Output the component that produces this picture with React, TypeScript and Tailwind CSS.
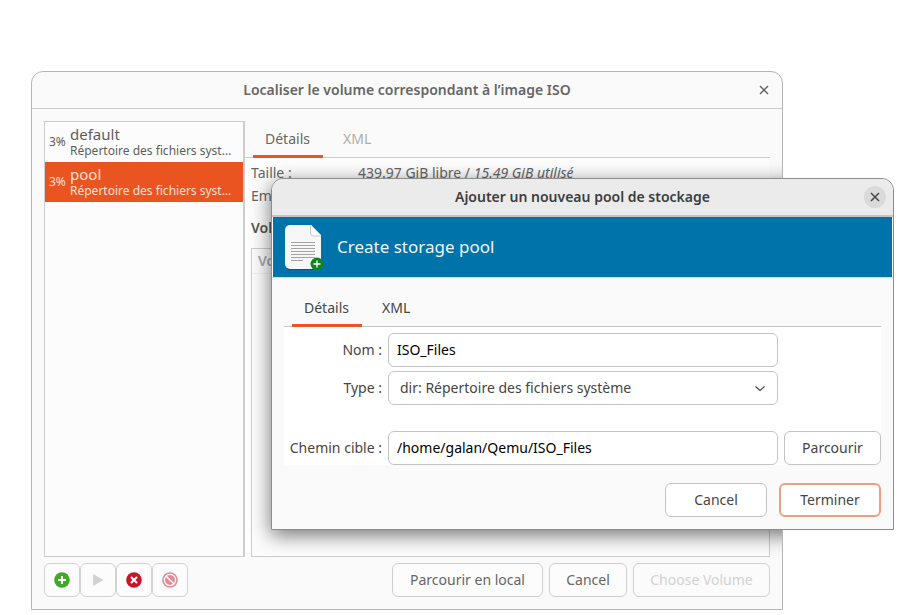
import type { ButtonHTMLAttributes, ReactNode } from "react";
import { clsx } from "clsx";

function CloseIcon() {
  return (
    <svg width="10" height="10" viewBox="0 0 10 10" fill="none" stroke="currentColor" strokeWidth="1.5" aria-hidden="true">
      <path d="M1 1l8 8M9 1L1 9" />
    </svg>
  );
}

function AddIcon() {
  return (
    <svg width="16" height="16" viewBox="0 0 16 16" aria-hidden="true">
      <circle cx="8" cy="8" r="7.8" fill="#41a829" />
      <path d="M8 4v8M4 8h8" stroke="#fff" strokeWidth="1.8" />
    </svg>
  );
}

function PlayIcon() {
  return (
    <svg width="16" height="16" viewBox="0 0 16 16" aria-hidden="true">
      <path d="M3 2l10.5 6L3 14z" fill="#d2d2d2" />
    </svg>
  );
}

function StopIcon() {
  return (
    <svg width="16" height="16" viewBox="0 0 16 16" aria-hidden="true">
      <circle cx="8" cy="8" r="7.8" fill="#c7162b" />
      <path d="M5 5l6 6M11 5l-6 6" stroke="#fff" strokeWidth="2" />
    </svg>
  );
}

function ForbiddenIcon() {
  return (
    <svg width="16" height="16" viewBox="0 0 16 16" aria-hidden="true">
      <circle cx="8" cy="8" r="7.8" fill="#e38a94" />
      <circle cx="8" cy="8" r="5.6" fill="none" stroke="#fff" strokeWidth="1.2" />
      <path d="M4.2 4.2l7.6 7.6" stroke="#fff" strokeWidth="1.3" />
    </svg>
  );
}

function DocumentIcon() {
  return (
    <svg width="42" height="48" viewBox="0 0 42 48" aria-hidden="true">
      <path d="M7 3h20l10 10v29a5 5 0 0 1-5 5H6a5 5 0 0 1-5-5V8a5 5 0 0 1 5-5z" fill="#00466b" opacity=".6" />
      <path d="M6 2h21l10 10v29a5 5 0 0 1-5 5H6a5 5 0 0 1-5-5V7a5 5 0 0 1 5-5z" fill="#f7f7f7" />
      <path d="M27 2l10 11h-7a3 3 0 0 1-3-3z" fill="#fff" />
      <path d="M26.500 2.500V10a3 3 0 0 0 3 3H37" fill="none" stroke="#c9c9c9" />
      <path d="M7 19.500h24M7 22.500h24M7 25.500h24M7 28.500h24M7 31.500h24M7 34.500h24M7 37.500h12" stroke="#a3a3a3" />
      <circle cx="33" cy="41" r="6.500" fill="#0e8420" />
      <path d="M33 37.500v7M29.500 41h7" stroke="#fff" strokeWidth="1.3" />
    </svg>
  );
}

function Button({ className, ...rest }: ButtonHTMLAttributes<HTMLButtonElement>) {
  return (
    <button
      type="button"
      className={clsx("flex h-[34px] items-center justify-center rounded-md whitespace-nowrap", className)}
      {...rest}
    />
  );
}

function Tab({ selected, children, className }: { selected?: boolean; children: ReactNode; className?: string }) {
  return (
    <button
      type="button"
      role="tab"
      aria-selected={!!selected}
      className={clsx("-mb-px h-[37px] w-[70px] border-b-3 px-3 pt-[2px] text-left", selected ? "border-[#e95420]" : "border-transparent", className)}
    >
      {children}
    </button>
  );
}

function PoolRow({ name, selected }: { name: string; selected?: boolean }) {
  return (
    <li
      className={clsx(
        "flex h-10 items-center pl-1 text-xs",
        selected ? "bg-[#e95420] text-[#fbe0d6]" : "text-[#5c5c5c]",
      )}
    >
      <span className="w-[21px] shrink-0 whitespace-nowrap">3%</span>
      <span className="flex min-w-0 flex-col whitespace-nowrap">
        <span className="text-[15px] leading-[18px]">{name}</span>
        <span className="leading-4">Répertoire des fichiers syst…</span>
      </span>
    </li>
  );
}

const toolButtons = [
  { label: "Ajouter un pool", icon: <AddIcon />, disabled: false },
  { label: "Démarrer le pool", icon: <PlayIcon />, disabled: true },
  { label: "Arrêter le pool", icon: <StopIcon />, disabled: false },
  { label: "Supprimer le pool", icon: <ForbiddenIcon />, disabled: true },
];

function VolumeWindow() {
  return (
    <section className="relative flex flex-1 flex-col overflow-hidden rounded-t-xl border border-[#b4b4b4] bg-[#fafafa] text-[#666]">
      <header className="grid h-[37px] grid-cols-[32px_1fr_32px] items-center border-b border-[#cdcdcd] px-[2px]">
        <h1 className="col-start-2 text-center font-semibold">Localiser le volume correspondant à l’image ISO</h1>
        <button type="button" aria-label="Fermer" className="flex h-6 items-center justify-center">
          <CloseIcon />
        </button>
      </header>

      <div className="flex flex-1 flex-col gap-[6px] p-3">
        <div className="flex flex-1">
          <ul className="w-[201px] shrink-0 border border-r-2 border-[#cdcdcd] bg-[#fcfcfc]">
            <PoolRow name="default" />
            <PoolRow name="pool" selected />
          </ul>
          <div className="flex min-w-0 flex-1 flex-col">
            <div role="tablist" className="flex gap-2 border-b border-[#cdcdcd] pl-2">
              <Tab selected>Détails</Tab>
              <Tab className="text-[#adadad]">XML</Tab>
            </div>
            <div className="flex flex-1 flex-col bg-[#fdfdfd] pt-[5px] pl-[6px]">
              <dl className="grid grid-cols-[101px_1fr] gap-x-[6px] gap-y-[3px]">
                <dt>Taille :</dt>
                <dd>
                  439.97 GiB libre / <i>15.49 GiB utilisé</i>
                </dd>
                <dt>Emplacement :</dt>
                <dd />
              </dl>
              <h2 className="pt-3 pb-[10px] font-semibold text-[#555]">Volumes</h2>
              <div className="flex-1 border border-[#cdcdcd] bg-[#fcfcfc]">
                <p className="border-b border-[#f0f0f0] px-[6px] py-[2px] font-semibold text-[#a8a8a8]">Volumes</p>
              </div>
            </div>
          </div>
        </div>

        <footer className="flex items-center gap-[6px]">
          <div className="mr-auto flex">
            {toolButtons.map((tool) => (
              <Button
                key={tool.label}
                aria-label={tool.label}
                disabled={tool.disabled}
                className="w-9 border border-[#d2d2d2] bg-[#fcfcfc]"
              >
                {tool.icon}
              </Button>
            ))}
          </div>
          <Button className="w-[151px] border border-[#cfcfcf] bg-[#fcfcfc]">Parcourir en local</Button>
          <Button className="w-[78px] border border-[#cfcfcf] bg-[#fcfcfc]">Cancel</Button>
          <Button disabled className="w-[137px] border border-[#cfcfcf] bg-[#fbfbfb] text-[#d2d2d2]">
            Choose Volume
          </Button>
        </footer>
      </div>

      {/* Shade cast by the dialog, kept inside this window's frame */}
      <div
        aria-hidden="true"
        className="pointer-events-none absolute top-[106px] -right-28 bottom-[79px] left-[239px] rounded-t-xl shadow-[0_5px_20px_rgba(0,0,0,0.55)]"
      />
    </section>
  );
}

function PoolDialog() {
  const field = "h-[34px] w-full rounded-md border border-[#c4c4c4] bg-white";
  return (
    <section
      role="dialog"
      aria-labelledby="dialog-title"
      className="absolute top-[178px] right-[5px] left-[271px] rounded-t-xl border border-[#8c8c8c] bg-[#fafafa] text-[#454545]"
    >
      <header className="grid h-[38px] grid-cols-[32px_1fr_32px] items-center rounded-t-xl border-b-2 border-[#c4c4c4] bg-[#ebebeb] px-[2px]">
        <h2 id="dialog-title" className="col-start-2 text-center font-semibold text-[#3d3d3d]">
          Ajouter un nouveau pool de stockage
        </h2>
        <button
          type="button"
          aria-label="Fermer"
          className="flex size-[22px] items-center justify-center justify-self-center rounded-full bg-[#dadada]"
        >
          <CloseIcon />
        </button>
      </header>

      <div className="mx-px flex h-[60px] items-center gap-[11px] bg-[#0073aa] pl-[11px] text-[17px] text-[#eef5f9]">
        <DocumentIcon />
        <p>Create storage pool</p>
      </div>

      <div className="border-t border-[#d8d8d8] p-3">
        <div role="tablist" className="flex gap-2 border-b border-[#c6c6c6] pl-2">
          <Tab selected>Détails</Tab>
          <Tab>XML</Tab>
        </div>
        <form className="grid grid-cols-[98px_1fr_97px] items-center gap-x-[6px] gap-y-1 bg-white pt-[6px]">
          <label htmlFor="pool-name" className="text-right whitespace-nowrap">Nom :</label>
          <input id="pool-name" defaultValue="ISO_Files" className={clsx(field, "px-2 pb-[2px] text-black")} />
          <label htmlFor="pool-type" className="col-start-1 text-right whitespace-nowrap">Type :</label>
          <div className="relative">
            <select id="pool-type" className={clsx(field, "appearance-none px-[11px]")}>
              <option>dir: Répertoire des fichiers système</option>
            </select>
            <svg
              className="pointer-events-none absolute top-3 right-3"
              width="12"
              height="12"
              viewBox="0 0 12 12"
              fill="none"
              stroke="#454545"
              strokeWidth="1.2"
              aria-hidden="true"
            >
              <path d="M1.500 3.500L6 7.500l4.500-4" />
            </svg>
          </div>
          <label htmlFor="pool-path" className="col-start-1 mt-[22px] text-right whitespace-nowrap">Chemin cible :</label>
          <div className="mt-[22px]">
            <input id="pool-path" defaultValue="/home/galan/Qemu/ISO_Files" className={clsx(field, "px-2 pb-[2px] text-black")} />
          </div>
          <Button className="mt-[22px] border border-[#c4c4c4] bg-white">Parcourir</Button>
        </form>
        <footer className="flex justify-end gap-3 pt-[18px]">
          <Button className="w-[102px] border border-[#c4c4c4] bg-white">Cancel</Button>
          <Button className="w-[102px] border-2 border-[#ee9f82] bg-white">Terminer</Button>
        </footer>
      </div>
    </section>
  );
}

export default function App() {
  return (
    <main className="relative flex min-h-screen flex-col bg-white pt-[71px] pr-[116px] pb-[5px] pl-[31px] font-['Noto_Sans',sans-serif] text-sm">
      <VolumeWindow />
      <PoolDialog />
    </main>
  );
}
